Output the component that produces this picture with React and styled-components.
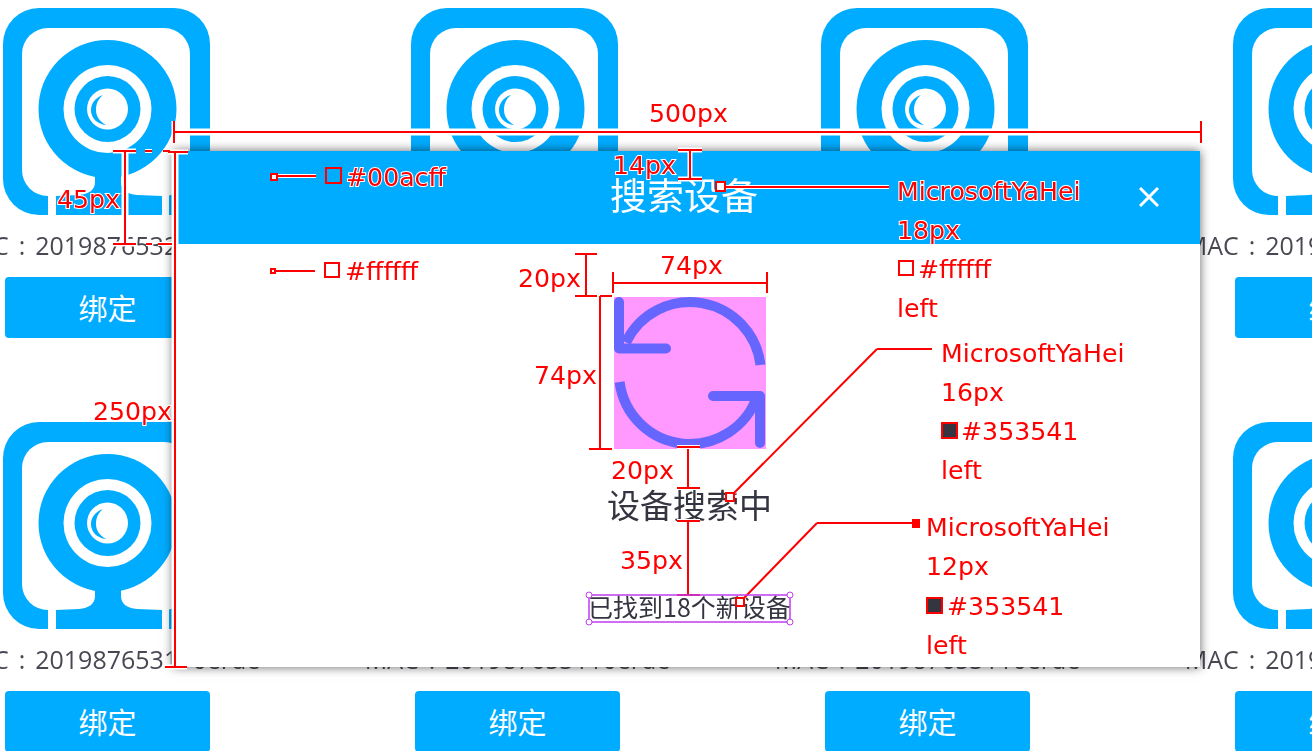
import React from 'react';
import styled, { createGlobalStyle } from 'styled-components';

const BLUE = '#00acff';
const INK = '#353541';

const GlobalStyle = createGlobalStyle`
  html, body {
    margin: 0;
    padding: 0;
    background: #fff;
  }
`;

const Page = styled.div`
  position: relative;
  width: 1312px;
  height: 751px;
  overflow: hidden;
  background: #fff;
  font-family: "Noto Sans CJK SC", "Noto Sans", sans-serif;
`;

const DeviceGrid = styled.div`
  display: grid;
  grid-template-columns: repeat(4, 205px);
  column-gap: 205px;
  row-gap: 84px;
  padding: 8px 0 0 5px;
  filter: blur(0.4px);
`;

const Tile = styled.div`
  display: flex;
  flex-direction: column;
  width: 205px;
  height: 330px;
`;

const Camera = styled.svg`
  display: block;
  flex: none;
  width: 207px;
  height: 207px;
  margin-left: ${(p) => p.$nudge}px;
`;

const Mac = styled.div`
  display: flex;
  justify-content: center;
  align-items: center;
  height: 60px;
  padding-bottom: 2px;
  white-space: pre;
  font-family: "Open Sans", "Noto Sans", sans-serif;
  font-size: 25px;
  word-spacing: 3.5px;
  color: ${INK};
  opacity: 0.9;
`;

const BindButton = styled.button`
  display: block;
  width: 205px;
  height: 61px;
  padding: 0 0 2px;
  border: 0;
  border-radius: 4px;
  background: ${BLUE};
  color: #fff;
  font-family: inherit;
  font-size: 29px;
`;

const Dialog = styled.section`
  position: absolute;
  left: 173px;
  top: 151px;
  display: flex;
  flex-direction: column;
  width: 1027px;
  height: 516px;
  background: #fff;
  box-shadow: 0 0 10px rgba(0, 0, 0, 0.6);
`;

const DialogHeader = styled.header`
  display: grid;
  grid-template-columns: 1fr auto 1fr;
  height: 93px;
  background: ${BLUE};
`;

const DialogTitle = styled.h2`
  grid-column: 2;
  margin: 19px 5px 0 0;
  font-size: 37px;
  line-height: 48px;
  font-weight: 400;
  color: #fff;
  filter: blur(0.4px);
`;

const CloseIcon = styled.svg`
  grid-column: 3;
  justify-self: end;
  width: 20px;
  height: 20px;
  margin: 36px 41px 0 0;
`;

const DialogBody = styled.div`
  display: flex;
  flex-direction: column;
  align-items: center;
  padding-top: 53px;
  color: ${INK};
`;

const SyncIcon = styled.svg`
  display: block;
  width: 152px;
  height: 152px;
  margin-left: 7px;
  background: #ff99ff;
`;

const Status = styled.div`
  margin: 33px 0 0 6px;
  font-size: 33px;
  line-height: 44px;
  filter: blur(0.4px);
`;

const Found = styled.div`
  margin: 65px 0 0 6px;
  font-size: 25px;
  line-height: 30px;
  filter: blur(0.4px);
`;

const Markup = styled.div`
  position: absolute;
  inset: 0;
  pointer-events: none;
`;

const MarkupLines = styled.svg`
  position: absolute;
  left: 0;
  top: 0;
  width: 1312px;
  height: 751px;
`;

const Note = styled.span`
  position: absolute;
  left: ${(p) => p.$x}px;
  top: ${(p) => p.$y - 14}px;
  font-family: "DejaVu Sans", sans-serif;
  font-size: 25.2px;
  line-height: 30px;
  white-space: nowrap;
  color: #f00;
  -webkit-text-stroke: 2px #fff;
  paint-order: stroke fill;
`;

const devices = [0, 1, 2, 3, 4, 5, 6, 7];
const nudges = [-2, -4, -4, -2];

// [x1, y1, x2, y2, halo]
const lines = [
  [174, 132, 1201, 132, 7], [174, 121, 174, 143, 5], [1201, 121, 1201, 143, 5],
  [690, 150, 690, 179, 5], [678, 150, 702, 150, 5], [678, 179, 702, 179, 5],
  [125, 151, 125, 244, 7], [113, 151, 136, 151, 5], [113, 244, 136, 244, 5],
  [145, 151, 152, 151, 4], [163, 151, 170, 151, 4], [146, 244, 152, 244, 4], [158, 244, 172, 244, 4],
  [175, 152, 175, 667, 7], [168, 152, 188, 152, 5], [165, 667, 187, 667, 5],
  [586, 254, 586, 296, 4], [575, 254, 597, 254, 4], [575, 296, 597, 296, 4],
  [612, 283, 767, 283, 4], [613, 272, 613, 293, 4], [767, 272, 767, 293, 4],
  [600, 296, 600, 449, 4], [600, 296, 612, 296, 4], [589, 449, 612, 449, 4],
  [688, 449, 688, 488, 4], [677, 447, 700, 447, 4], [677, 488, 700, 488, 4],
  [688, 521, 688, 595, 4], [677, 521, 700, 521, 4], [677, 595, 700, 595, 4],
  [275, 176, 316, 176, 4], [275, 271, 315, 271, 4],
  [725, 187, 889, 187, 4],
  [733, 494, 877, 349, 3], [877, 349, 932, 349, 3],
  [744, 598, 817, 523, 3], [817, 523, 914, 523, 3],
];

const notes = [
  ['500px', 649, 113], ['14px', 613, 165], ['45px', 57, 199], ['250px', 93, 411],
  ['#00acff', 346, 177], ['#ffffff', 345, 271],
  ['20px', 518, 278], ['74px', 660, 265], ['74px', 534, 375], ['20px', 611, 470], ['35px', 620, 560],
  ['MicrosoftYaHei', 897, 191], ['18px', 897, 230], ['#ffffff', 918, 269], ['left', 897, 308],
  ['MicrosoftYaHei', 941, 353], ['16px', 941, 392], ['#353541', 961, 431], ['left', 941, 470],
  ['MicrosoftYaHei', 926, 527], ['12px', 926, 566], ['#353541', 947, 606], ['left', 926, 645],
];

// [x, y, size, fill]
const swatches = [
  [326, 168, 15, BLUE], [325, 263, 14, '#fff'], [899, 261, 14, '#fff'],
  [942, 423, 15, INK], [927, 598, 15, INK],
  [716, 182, 9, '#fff'], [726, 493, 8, '#fff'], [736, 598, 8, '#fff'],
  [271, 174, 6, '#fff'], [271, 269, 4, '#fff'],
];

function CameraGlyph({ nudge }) {
  return (
    <Camera $nudge={nudge} viewBox="0 0 207 207">
      <rect width="207" height="207" rx="36" fill={BLUE} />
      <rect x="19" y="20" width="168" height="168" rx="26" fill="#fff" />
      <path
        d="M92 160V174C92 182 86 186 76 187L53 188V207H159V188L134 187C124 186 118 182 118 174V160Z"
        fill={BLUE}
      />
      <rect x="45" y="186" width="8" height="21" fill="#fff" />
      <rect x="159" y="186" width="7" height="21" fill="#fff" />
      <circle cx="104.5" cy="101" r="69" fill={BLUE} />
      <circle cx="104.5" cy="101" r="44" fill="#fff" />
      <circle cx="104.5" cy="101" r="33" fill={BLUE} />
      <circle cx="104.5" cy="101" r="20.5" fill="#fff" />
      <path d="M100 87C91 90 88 97 88 102C88 110 94 116 103 117C96 113 93 108 93 102C93 96 95 91 100 87Z" fill={BLUE} />
    </Camera>
  );
}

export default function App() {
  return (
    <Page>
      <GlobalStyle />
      <DeviceGrid>
        {devices.map((d) => (
          <Tile key={d}>
            <CameraGlyph nudge={nudges[d % 4]} />
            <Mac>{d < 4 ? 'MAC : 201987653210erde' : 'MAC : 201987653110erde'}</Mac>
            <BindButton>绑定</BindButton>
          </Tile>
        ))}
      </DeviceGrid>

      <Dialog>
        <DialogHeader>
          <DialogTitle>搜索设备</DialogTitle>
          <CloseIcon viewBox="0 0 20 20">
            <path d="M1 1L19 19M19 1L1 19" stroke="#fff" strokeWidth="3" fill="none" />
          </CloseIcon>
        </DialogHeader>
        <DialogBody>
          <SyncIcon viewBox="0 0 152 152" fill="none" stroke="#6666ff" strokeWidth="10" strokeLinecap="round" strokeLinejoin="round">
            <path d="M5 5V51.5H52" />
            <path d="M12 45.3A71 71 0 0 1 146.5 68" strokeLinecap="butt" />
            <path d="M99 99H146V146" />
            <path d="M5.6 85A71 71 0 0 0 143.2 99" strokeLinecap="butt" />
          </SyncIcon>
          <Status>设备搜索中</Status>
          <Found>已找到18个新设备</Found>
        </DialogBody>
      </Dialog>

      <Markup>
        <MarkupLines viewBox="0 0 1312 751">
          {lines.map(([x1, y1, x2, y2, halo], i) => (
            <line key={i} x1={x1} y1={y1} x2={x2} y2={y2} stroke="#fff" strokeWidth={halo} />
          ))}
          {lines.map(([x1, y1, x2, y2], i) => (
            <line key={i} x1={x1} y1={y1} x2={x2} y2={y2} stroke="#f00" strokeWidth="2" />
          ))}
          {swatches.map(([x, y, size, fill], i) => (
            <rect key={i} x={x} y={y} width={size} height={size} fill={fill} stroke="#f00" strokeWidth="2" />
          ))}
          <rect x="912" y="519" width="8" height="9" fill="#f00" />
          <rect x="589" y="595" width="201" height="27" fill="none" stroke="#c03cf0" strokeWidth="1.5" />
          {[[589, 595], [790, 595], [589, 622], [790, 622]].map(([cx, cy]) => (
            <circle key={`${cx}-${cy}`} cx={cx} cy={cy} r="3" fill="#fff" stroke="#c03cf0" strokeWidth="1" />
          ))}
        </MarkupLines>
        {notes.map(([text, x, y]) => (
          <Note key={`${text}-${x}-${y}`} $x={x} $y={y}>{text}</Note>
        ))}
      </Markup>
    </Page>
  );
}
